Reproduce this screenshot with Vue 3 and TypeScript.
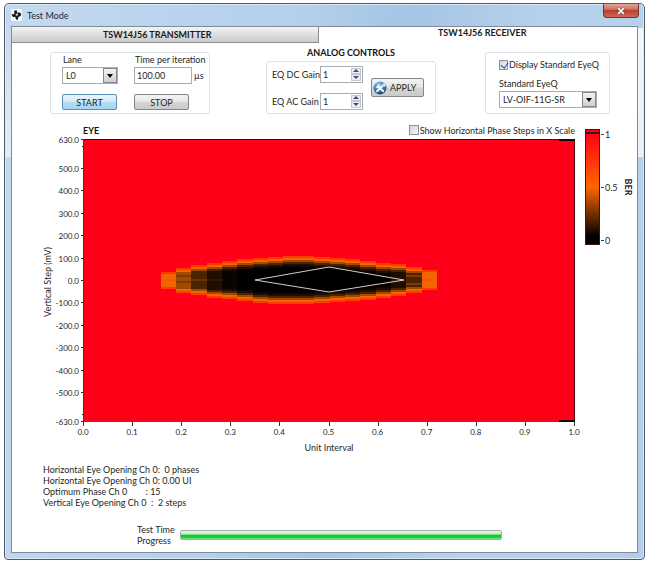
<script setup lang="ts">
import { ref } from 'vue'

interface Cell { x: number; y: number; w: number; h: number; fill: string }

const lane = ref('L0')
const iterationTime = ref('100.00')
const dcGain = ref(1)
const acGain = ref(1)
const showStandard = ref(true)
const standard = ref('LV-OIF-11G-SR')
const phaseSteps = ref(false)

const results = [
  'Horizontal Eye Opening Ch 0:  0 phases',
  'Horizontal Eye Opening Ch 0: 0.00 UI',
  'Optimum Phase Ch 0        : 15',
  'Vertical Eye Opening Ch 0  :  2 steps',
]

const left = 84
const right = 575
const top = 140
const bottom = 422

const yAt = (mv: number): number => 281 - (mv * (bottom - top)) / 1260
const xAt = (ui: number): number => left + ui * (right - left)

const yLabels = [630, 500, 400, 300, 200, 100, 0, -100, -200, -300, -400, -500, -630]
const yMinor = [600, -600]
const xLabels = Array.from({ length: 11 }, (_, i) => i / 10)

// Upper and lower edge of the eye for each phase column
const edges: [number, number][] = [
  [272, 289], [268, 293], [265, 295], [263, 298], [261, 299], [259, 301],
  [258, 303], [257, 304], [256, 304], [256, 304], [257, 303], [258, 302],
  [259, 301], [261, 300], [263, 298], [264, 296], [267, 293], [270, 290],
]
const ramp = ['#ff3a00', '#f26600', '#a34a00', '#4c2300', '#1f0e00', '#0a0400', '#000000']
// Darkest ramp step that each column reaches
const depth = [1, 2, 3, 4, 5, 6, 6, 6, 6, 6, 6, 6, 6, 6, 6, 4, 3, 1]
const columnWidth = (right - left) / 32

const cells: Cell[] = edges.flatMap(([y0, y1], column) => {
  const rows = Math.round((y1 - y0) / 2)
  const h = (y1 - y0) / rows
  return Array.from({ length: rows }, (_, row) => {
    const inner = Math.min(row, rows - 1 - row)
    return {
      x: left + (column + 5) * columnWidth,
      y: y0 + row * h,
      w: columnWidth,
      h,
      fill: ramp[Math.min(inner, depth[column])],
    }
  })
})

// Lighter bands that run through the partly closed columns
const bands = [
  { column: 0, y: 279, fill: '#ff5400' },
  { column: 1, y: 275, fill: '#7d3a00' },
  { column: 1, y: 281, fill: '#7d3a00' },
  { column: 2, y: 279, fill: '#6b3100' },
  { column: 3, y: 279, fill: '#331700' },
  { column: 15, y: 280, fill: '#331700' },
  { column: 16, y: 275, fill: '#7d3a00' },
  { column: 16, y: 283, fill: '#7d3a00' },
  { column: 17, y: 279, fill: '#ff5400' },
]
</script>

<template>
  <div class="desktop">
    <div class="window">
      <header class="titlebar">
        <svg class="logo" viewBox="0 0 12 12" aria-hidden="true">
          <path d="M3.600 1h3v2.600h1.200l1-.5 1.500.6.9 2-1.200 1.600-1.600.5-.9 1.400.3 1.600-1.200.6-1.400-1.300-.6-1.800-1.100-.5-.8.6L1.400 7 .5 5.300h3.100z" fill="#151515" />
          <path d="M6.300 4.600 5.600 7.400M7.400 4.900l-.3 1.600M5 5.300h2.700" stroke="#fff" stroke-width=".8" fill="none" />
        </svg>
        <h1>Test Mode</h1>
        <button class="close" type="button" aria-label="Close">
          <svg viewBox="0 0 10 8" aria-hidden="true">
            <path d="M2.200 1.200 7.800 6.800M7.800 1.200 2.200 6.800" stroke="#6b3a38" stroke-width="3" />
            <path d="M2.200 1.200 7.800 6.800M7.800 1.200 2.200 6.800" stroke="#fff" stroke-width="1.800" />
          </svg>
        </button>
      </header>

      <main class="client">
        <nav class="tabs">
          <button class="tab" type="button">TSW14J56 TRANSMITTER</button>
          <button class="tab active" type="button">TSW14J56 RECEIVER</button>
        </nav>

        <section class="controls">
          <div class="panel run">
            <div class="field">
              <label for="lane">Lane</label>
              <div class="select">
                <select id="lane" v-model="lane"><option>L0</option><option>L1</option></select>
                <span class="arrow"><svg viewBox="0 0 6 4"><path d="M0 0h6L3 4z" /></svg></span>
              </div>
            </div>
            <div class="field">
              <label for="time">Time per iteration</label>
              <div class="unit"><input id="time" v-model="iterationTime" type="text" /><span>µs</span></div>
            </div>
            <button class="btn start" type="button">START</button>
            <button class="btn" type="button">STOP</button>
          </div>

          <div class="analog">
            <h2>ANALOG CONTROLS</h2>
            <div class="panel gains">
              <div class="gain-list">
                <div class="gain">
                  <label for="dc">EQ DC Gain</label>
                  <div class="spin">
                    <input id="dc" v-model.number="dcGain" type="number" />
                    <div class="steps">
                      <button type="button" aria-label="Increase DC gain" @click="dcGain++"><svg viewBox="0 0 6 3"><path d="M0 3h6L3 0z" /></svg></button>
                      <button type="button" aria-label="Decrease DC gain" @click="dcGain--"><svg viewBox="0 0 6 3"><path d="M0 0h6L3 3z" /></svg></button>
                    </div>
                  </div>
                </div>
                <div class="gain">
                  <label for="ac">EQ AC Gain</label>
                  <div class="spin">
                    <input id="ac" v-model.number="acGain" type="number" />
                    <div class="steps">
                      <button type="button" aria-label="Increase AC gain" @click="acGain++"><svg viewBox="0 0 6 3"><path d="M0 3h6L3 0z" /></svg></button>
                      <button type="button" aria-label="Decrease AC gain" @click="acGain--"><svg viewBox="0 0 6 3"><path d="M0 0h6L3 3z" /></svg></button>
                    </div>
                  </div>
                </div>
              </div>
              <button class="btn apply" type="button">
                <svg viewBox="0 0 14 14" aria-hidden="true">
                  <defs>
                    <radialGradient id="ball" cx=".4" cy=".25" r=".8">
                      <stop offset="0" stop-color="#9cc8ea" />
                      <stop offset=".5" stop-color="#3f83bd" />
                      <stop offset="1" stop-color="#123f70" />
                    </radialGradient>
                  </defs>
                  <circle cx="7" cy="7" r="6.500" fill="url(#ball)" />
                  <path d="M3.500 10.800 10 4.600M5 5.200l5.800 5.600" stroke="#fff" stroke-width="1.900" />
                  <path d="M2.700 6.200 6 3.200l1.400 1.500-3.200 2.700zM9 3.300l2.600 2.600 1-1.900-1.300-1.500z" fill="#e8f3fc" />
                </svg>
                APPLY
              </button>
            </div>
          </div>

          <div class="panel eyeq">
            <label class="check"><input v-model="showStandard" type="checkbox" />Display Standard EyeQ</label>
            <label for="standard">Standard EyeQ</label>
            <div class="select">
              <select id="standard" v-model="standard"><option>LV-OIF-11G-SR</option></select>
              <span class="arrow"><svg viewBox="0 0 6 4"><path d="M0 0h6L3 4z" /></svg></span>
            </div>
          </div>
        </section>

        <section class="chart">
          <div class="plot">
            <div class="plot-head">
              <h2>EYE</h2>
              <label class="check"><input v-model="phaseSteps" type="checkbox" />Show Horizontal Phase Steps in X Scale</label>
            </div>
            <svg class="graph" viewBox="12 138 570 318">
              <rect :x="left" :y="top" :width="right - left" :height="bottom - top" fill="#ff0019" />
              <g shape-rendering="crispEdges">
                <rect v-for="(c, i) in cells" :key="i" :x="c.x" :y="c.y" :width="c.w" :height="c.h" :fill="c.fill" />
                <rect v-for="(b, i) in bands" :key="i" :x="left + (b.column + 5) * columnWidth" :y="b.y" :width="columnWidth" height="2" :fill="b.fill" />
              </g>
              <path d="M255 280 329 267 404 280 329 292z" fill="none" stroke="#d4cccc" />
              <path d="M84 139.500H574.500V422" fill="none" stroke="#50080f" />
              <path d="M83.500 139V422" stroke="#8a1420" />
              <path d="M559 140H575M559 421H575" stroke="#1a0505" stroke-width="2" />
              <g stroke="#333">
                <path v-for="v in yLabels" :key="v" :d="`M81 ${Math.round(yAt(v)) - 0.5}h3`" />
                <path v-for="v in yMinor" :key="v" :d="`M82 ${Math.round(yAt(v)) - 0.5}h2`" />
                <path v-for="v in xLabels" :key="v" :d="`M${Math.round(xAt(v)) - 0.5} 422v4`" />
              </g>
              <g class="ticks" text-anchor="end">
                <text v-for="v in yLabels" :key="v" x="79" :y="yAt(v) + 3">{{ v.toFixed(1) }}</text>
              </g>
              <g class="ticks" text-anchor="middle">
                <text v-for="v in xLabels" :key="v" :x="xAt(v) - 1" y="435">{{ v.toFixed(1) }}</text>
              </g>
              <text class="axis" x="329" y="451" text-anchor="middle">Unit Interval</text>
              <text class="axis" transform="translate(51 282) rotate(-90)" text-anchor="middle">Vertical Step (mV)</text>
            </svg>
          </div>
          <svg class="legend" viewBox="582 122 55 130">
            <defs>
              <linearGradient id="ber" x1="0" y1="0" x2="0" y2="1">
                <stop offset="0" stop-color="#ff0019" />
                <stop offset=".1" stop-color="#ff1010" />
                <stop offset=".5" stop-color="#ff6600" />
                <stop offset=".93" stop-color="#000" />
              </linearGradient>
            </defs>
            <rect x="585.500" y="129.500" width="14" height="115" fill="url(#ber)" stroke="#451010" />
            <path d="M586 133H600" stroke="#5b0810" stroke-width="2" />
            <path d="M601 134.500h3M601 187.500h3M601 240.500h3" stroke="#444" />
            <g class="axis">
              <text x="605" y="138">1</text>
              <text x="605" y="191">0.5</text>
              <text x="605" y="244">0</text>
            </g>
            <text class="ber" transform="translate(625 187) rotate(90)" text-anchor="middle">BER</text>
          </svg>
        </section>

        <section class="results">
          <p v-for="line in results" :key="line">{{ line }}</p>
        </section>

        <section class="progress">
          <label for="progress">Test Time Progress</label>
          <progress id="progress" value="100" max="100"></progress>
        </section>
      </main>
    </div>
  </div>
</template>

<style>
body {
  margin: 0;
  background: #fff;
}
</style>

<style scoped>
* {
  box-sizing: border-box;
}
.desktop {
  display: flex;
  min-height: 100vh;
  padding: 3px 5px 4px 4px;
  font: 9px/11px Lato, "Open Sans", sans-serif;
  color: #262626;
}
.window {
  flex: 1;
  display: flex;
  flex-direction: column;
  padding: 0 6px 6px;
  border: 1px solid #4f5b68;
  border-radius: 5px 5px 4px 4px;
  background:
    linear-gradient(#f2f7fc, #e9f1f9) right 24px / 6px 129px no-repeat,
    linear-gradient(#c8daed, #e4eef8) left 24px / 6px 129px no-repeat,
    linear-gradient(100deg, #c3d9ef 0%, #b4d0ec 40%, #a5c5e5 55%, #b7d2ec 75%, #b2ceea 100%);
  box-shadow: inset 0 0 0 1px #dceaf7;
}
.titlebar {
  display: flex;
  align-items: center;
  height: 22px;
}
.logo {
  width: 11px;
  height: 12px;
  background: #f3f6fa;
}
h1,
h2,
p {
  margin: 0;
}
h1 {
  flex: 1;
  margin-left: 5px;
  font-size: 9px;
  font-weight: 400;
  color: #1c2a38;
}
.close {
  display: grid;
  place-items: center;
  align-self: flex-start;
  width: 36px;
  height: 14px;
  margin-right: -1px;
  padding: 0;
  border: 1px solid #6d3434;
  border-top: 0;
  border-radius: 0 0 4px 4px;
  background: linear-gradient(#e5a59a, #cd6a5b 45%, #b7402f 50%, #cf6a52);
}
.close svg {
  width: 10px;
  height: 8px;
}
.client {
  flex: 1;
  border: 1px solid #7d8b9a;
  background: #fff;
}
.tabs {
  display: grid;
  grid-template-columns: 307fr 317fr;
  height: 16px;
}
.tab {
  padding: 0 16px 0 0;
  border: 0;
  border-right: 1px solid #8d8d8d;
  border-bottom: 1px solid #8d8d8d;
  background: linear-gradient(#f4f4f4, #dedede 50%, #cbcbcb);
  font: 700 9px/12px Lato, "Open Sans", sans-serif;
  color: #1b1b1b;
}
.tab.active {
  padding: 0 0 4px 8px;
  border: 0;
  background: none;
}
.controls {
  display: grid;
  grid-template-columns: 160px 8fr 170px 7fr 125px;
  align-items: end;
  padding: 4px 27px 0 38px;
}
.panel {
  border: 1px solid #dde4e8;
  border-radius: 3px;
}
.run {
  grid-column: 1;
  display: grid;
  grid-template-columns: 56px 72px;
  align-content: start;
  column-gap: 16px;
  row-gap: 10px;
  height: 62px;
  padding: 1px 0 0 11px;
}
.field label {
  display: block;
  height: 13px;
  padding-left: 1px;
}
.select {
  display: flex;
  position: relative;
  height: 17px;
  border: 1px solid #a9adb3;
}
select {
  flex: 1;
  min-width: 0;
  padding: 0 0 0 3px;
  border: 0;
  appearance: none;
  background: #fff;
  font: inherit;
  color: inherit;
}
.arrow {
  position: absolute;
  top: 0;
  right: 0;
  display: grid;
  place-items: center;
  width: 14px;
  height: 15px;
  border: 1px solid #85898f;
  background: linear-gradient(#f3f3f3, #cfcfcf);
  pointer-events: none;
}
.arrow svg {
  width: 6px;
  height: 4px;
}
.unit {
  display: flex;
  align-items: center;
  gap: 2px;
}
.unit input {
  width: 58px;
  height: 17px;
  padding: 0 2px;
  border: 1px solid #a9adb3;
  font: inherit;
  color: inherit;
}
.btn {
  width: 55px;
  height: 16px;
  padding: 0;
  border: 1px solid #858585;
  border-radius: 2px;
  background: linear-gradient(#f4f4f4, #e6e6e6 48%, #d4d4d4 52%, #cbcbcb);
  font: inherit;
  color: inherit;
}
.start {
  border-color: #5d8fb5;
  background: linear-gradient(#e8f6fd, #d0ebfa 48%, #b3ddf6 52%, #a5d5f3);
}
.analog {
  grid-column: 3;
}
h2 {
  font-size: 9px;
  font-weight: 700;
  color: #111;
}
.analog h2 {
  margin-bottom: 3px;
  text-align: center;
}
.gains {
  display: flex;
  align-items: center;
  gap: 8px;
  height: 53px;
  padding: 0 0 0 5px;
}
.gain-list {
  display: grid;
  row-gap: 10px;
}
.gain {
  display: flex;
  align-items: center;
  justify-content: space-between;
  width: 91px;
}
.spin {
  display: flex;
  width: 43px;
  height: 17px;
  border: 1px solid #a9adb3;
}
.spin input {
  flex: 1;
  min-width: 0;
  padding: 0 2px;
  border: 0;
  appearance: textfield;
  font: inherit;
  color: inherit;
}
.spin input::-webkit-inner-spin-button {
  display: none;
}
.steps {
  display: grid;
  grid-template-rows: 1fr 1fr;
  width: 12px;
  padding: 1px;
}
.steps button {
  display: grid;
  place-items: center;
  padding: 0;
  border: 1px solid #c3c7ce;
  background: #eceef2;
}
.steps svg {
  width: 6px;
  height: 3px;
  fill: #3d4d78;
}
.apply {
  display: flex;
  align-items: center;
  gap: 3px;
  width: 53px;
  height: 19px;
  padding: 0 0 0 1px;
}
.apply svg {
  width: 14px;
  height: 14px;
}
.eyeq {
  grid-column: 5;
  height: 62px;
  padding: 6px 12px 0 13px;
}
.eyeq label {
  display: block;
  margin-bottom: 2px;
}
.eyeq .check {
  display: flex;
  margin-bottom: 8px;
}
.check {
  display: flex;
  align-items: center;
  gap: 1px;
  white-space: nowrap;
}
.check input {
  width: 10px;
  height: 10px;
  margin: 0;
  border: 1px solid #8e9299;
  appearance: none;
  background: linear-gradient(135deg, #d3d6da, #f4f4f4);
}
.check input:checked::after {
  content: "";
  display: block;
  width: 4px;
  height: 6px;
  margin: 0 0 0 2px;
  border: solid #2d4b93;
  border-width: 0 1px 1px 0;
  transform: rotate(35deg);
}
.chart {
  display: grid;
  grid-template-columns: 570fr 55fr;
  align-items: start;
  padding-top: 8px;
}
.plot-head {
  display: flex;
  align-items: center;
  justify-content: space-between;
  height: 16px;
  padding: 0 7px 0 71px;
}
.graph,
.legend {
  display: block;
  width: 100%;
  overflow: visible;
}
.graph text,
.legend text {
  fill: #262626;
}
.ticks {
  font-size: 8px;
}
.axis {
  font-size: 9px;
}
.ber {
  font-size: 9px;
  font-weight: 700;
}
.results {
  padding: 8px 0 0 31px;
  white-space: pre;
}
.progress {
  display: flex;
  align-items: center;
  gap: 3px;
  padding: 16px 135px 4px 125px;
}
.progress label {
  width: 40px;
}
progress {
  flex: 1;
  height: 10px;
  border: 1px solid #a7aaa7;
  border-radius: 2px;
  appearance: none;
  overflow: hidden;
}
progress::-webkit-progress-bar {
  background: #eee;
}
progress::-webkit-progress-value {
  background: linear-gradient(#e9f8ea, #b9ecbd 40%, #14c530 50%, #1bcb38 80%, #8de59a);
}
</style>
